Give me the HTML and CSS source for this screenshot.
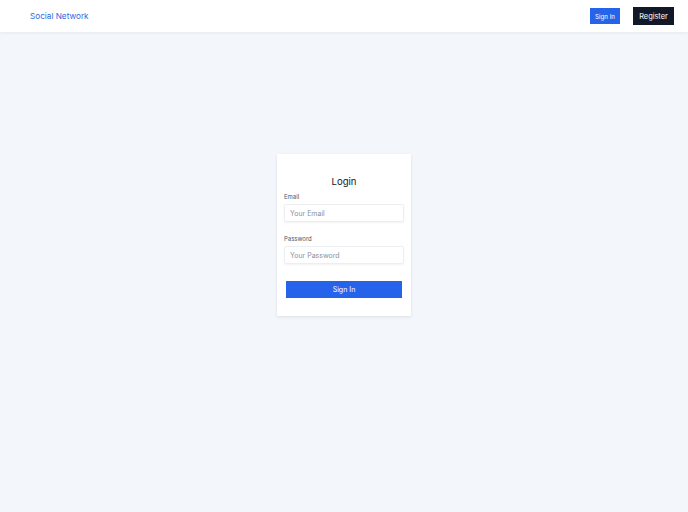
FILE: index.html
```html
<!DOCTYPE html>
<html lang="en">
<head>
<meta charset="utf-8">
<title>Social Network</title>
<link rel="stylesheet" href="styles.css">
</head>
<body>
<header class="topbar">
  <a class="brand" href="#">Social Network</a>
  <nav class="actions">
    <a class="btn-signin" href="#">Sign In</a>
    <a class="btn-register" href="#">Register</a>
  </nav>
</header>
<main class="page">
  <form class="card">
    <h1 class="title">Login</h1>
    <div class="field">
      <label class="label">Email</label>
      <input class="input" type="email" placeholder="Your Email">
    </div>
    <div class="field">
      <label class="label">Password</label>
      <input class="input" type="password" placeholder="Your Password">
    </div>
    <button class="submit" type="button">Sign In</button>
  </form>
</main>
</body>
</html>
```

FILE: styles.css
```css
* { box-sizing: border-box; }
html, body { margin: 0; padding: 0; }
body {
  font-family: Inter, "Noto Sans", sans-serif;
  background: #f3f6fb;
  min-height: 512px;
  color: #111827;
}
.topbar {
  height: 32px;
  background: #ffffff;
  box-shadow: 0 1px 3px rgba(0,0,0,0.06);
  display: flex;
  align-items: center;
  justify-content: space-between;
  padding: 0 14px 0 30px;
  position: relative;
}
.brand {
  font-size: 8.2px;
  color: #3068dc;
  text-decoration: none;
}
.actions {
  display: flex;
  align-items: center;
  gap: 13px;
}
.btn-signin {
  display: flex;
  align-items: center;
  justify-content: center;
  width: 30px;
  height: 16px;
  margin-left: 1px;
  background: #2563eb;
  color: #fff;
  font-size: 6.2px;
  text-decoration: none;
}
.btn-register {
  display: flex;
  align-items: center;
  justify-content: center;
  width: 41px;
  height: 18px;
  background: #111827;
  color: #fff;
  font-size: 7.4px;
  text-decoration: none;
}
.page {
  display: flex;
  justify-content: center;
  padding-top: 122px;
}
.card {
  width: 134px;
  background: #ffffff;
  box-shadow: 0 1px 3px rgba(0,0,0,0.1);
  padding: 21px 7px 18px;
  display: flex;
  flex-direction: column;
  margin: 0;
}
.title {
  margin: 0 0 3px;
  font-size: 9.6px;
  line-height: 14px;
  font-weight: 400;
  text-align: center;
  color: #111827;
}
.field {
  display: flex;
  flex-direction: column;
  margin-bottom: 12px;
}
.field:last-of-type { margin-bottom: 0; }
.label {
  font-size: 6px;
  line-height: 9px;
  color: #4b5563;
  margin-bottom: 3px;
}
.input {
  height: 18px;
  width: 120px;
  border: 1px solid #eceef2;
  border-radius: 2px;
  box-shadow: 0 1px 2px rgba(0,0,0,0.05);
  padding: 0 5px;
  font-family: inherit;
  font-size: 7px;
  color: #111827;
  background: #fff;
  outline: none;
}
.input::placeholder { color: #8a9099; }
.submit {
  margin: 17px 2px 0;
  height: 17px;
  width: 116px;
  border: 0;
  background: #2563eb;
  color: #fff;
  font-family: inherit;
  font-size: 7px;
  padding: 0;
}
```
